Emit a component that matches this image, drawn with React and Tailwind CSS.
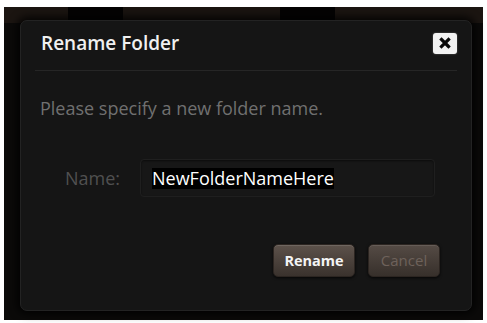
import React from "react";

const font = { fontFamily: '"Open Sans", "Noto Sans", sans-serif' };

function CloseButton() {
  return (
    <button
      type="button"
      className="flex h-[21px] w-[24px] items-center justify-center rounded-[3px] bg-[#f2f2f2] shadow-[0_0_2px_rgba(255,255,255,0.35)]"
    >
      <svg width="12" height="12" viewBox="0 0 12 12">
        <path
          d="M2.5 2.5 L9.5 9.5 M9.5 2.5 L2.5 9.5"
          stroke="#0a0a0a"
          strokeWidth="3.2"
          strokeLinecap="square"
        />
      </svg>
    </button>
  );
}

export default function App() {
  return (
    <div className="h-[323px] w-[487px] bg-white pl-[4px] pt-[7px]" style={font}>
      <div className="relative h-[313px] w-[479px] bg-[#0b0a09] pl-[16px] pt-[13px]">
        {/* app showing behind the dialog */}
        <div className="absolute left-0 right-0 top-0 flex h-[16px]">
          <div className="w-[64px] bg-[#1b1511]" />
          <div className="w-[55px] bg-[#040303]" />
          <div className="w-[157px] bg-[#1a1410]" />
          <div className="w-[55px] bg-[#040303]" />
          <div className="flex-1 bg-[#1b1511]" />
        </div>

        <div className="relative h-[291px] w-[452px] rounded-[7px] border border-[#232323] bg-[#151515] px-[14px] shadow-[0_0_8px_3px_rgba(0,0,0,0.85)]">
          <div className="mt-[9px] flex h-[26px] items-center justify-between pl-[6px]">
            <h1 className="text-[19px] font-semibold leading-[26px] text-[#f0f0f0]">
              Rename Folder
            </h1>
            <CloseButton />
          </div>

          <div className="mt-[14px] h-px bg-[#262626]" />

          <p className="mt-[25px] pl-[5px] text-[18px] leading-[24px] text-[#707070]">
            Please specify a new folder name.
          </p>

          <div className="mt-[39px] flex items-center pl-[30px]">
            <span className="w-[75px] text-[18px] leading-[24px] text-[#505050]">
              Name:
            </span>
            <div className="flex h-[38px] w-[295px] items-center rounded-[4px] border border-[#1f1f1f] bg-[#171717] pl-[11px] shadow-[inset_0_1px_2px_rgba(0,0,0,0.5)]">
              <span className="bg-black text-[18px] leading-[21px] text-white">
                NewFolderNameHere
              </span>
            </div>
          </div>

          <div className="mt-[47px] flex justify-end gap-[13px] pr-[17px]">
            <button
              type="button"
              className="h-[33px] w-[82px] rounded-[5px] border border-[#2c2521] bg-gradient-to-b from-[#5d524b] to-[#3a322d] text-[14.5px] font-bold text-[#f4f4f4] shadow-[inset_0_1px_0_rgba(255,255,255,0.12),0_1px_3px_rgba(0,0,0,0.8)]"
            >
              Rename
            </button>
            <button
              type="button"
              className="h-[33px] w-[72px] rounded-[5px] border border-[#2c2521] bg-gradient-to-b from-[#554b45] to-[#37302b] text-[15px] text-[#6e625b] shadow-[inset_0_1px_0_rgba(255,255,255,0.1),0_1px_3px_rgba(0,0,0,0.8)]"
            >
              Cancel
            </button>
          </div>
        </div>
      </div>
    </div>
  );
}
